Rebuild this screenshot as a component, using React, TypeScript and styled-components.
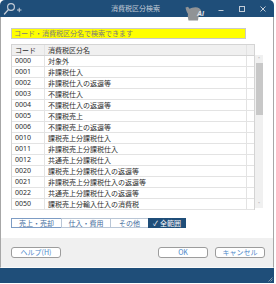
import styled, { createGlobalStyle } from "styled-components";

const GlobalStyle = createGlobalStyle`
  html, body {
    margin: 0;
    padding: 0;
  }
  body {
    width: 276px;
    height: 284px;
    overflow: hidden;
    background: #ffffff;
    font-family: "Noto Sans CJK JP", "Noto Sans", sans-serif;
  }
  * {
    box-sizing: border-box;
  }
`;

const Window = styled.div`
  width: 274px;
  height: 283px;
  display: flex;
  flex-direction: column;
  border-radius: 5px 5px 0 0;
  overflow: hidden;
`;

const TitleBar = styled.div`
  height: 17px;
  flex-shrink: 0;
  background: #1f4e79;
  display: grid;
  grid-template-columns: 1fr auto 1fr;
  align-items: center;
  padding: 0 4px 0 1px;
`;

const Title = styled.div`
  font-size: 7px;
  line-height: 17px;
  color: #c3ccd7;
`;

const Controls = styled.div`
  justify-self: end;
  display: flex;
  align-items: center;
  gap: 7px;
`;

const AiIcon = styled.div`
  position: relative;
  width: 20px;
  height: 15px;
  margin-right: 2px;
  margin-top: 1px;

  span {
    position: absolute;
    right: 1px;
    bottom: 0;
    font-family: "Liberation Sans", sans-serif;
    font-style: italic;
    font-weight: bold;
    font-size: 7px;
    line-height: 7px;
    color: #e2e5e9;
  }
`;

const ControlButton = styled.div`
  width: 14px;
  height: 17px;
  display: flex;
  align-items: center;
  justify-content: center;
`;

const Body = styled.div`
  flex: 1;
  background: #ffffff;
  border-left: 1px solid #a7a7a7;
  border-right: 1px solid #a7a7a7;
  padding: 11px 10px 0 10px;
  display: flex;
  flex-direction: column;
`;

const SearchBox = styled.div`
  width: 235px;
  height: 11px;
  background: #ffff00;
  border: 1px solid #c9c9c9;
  padding-left: 2px;
  font-size: 7px;
  line-height: 9px;
  color: #7c7c7c;
`;

const TableArea = styled.div`
  margin-top: 5px;
  display: flex;
  align-items: flex-start;
`;

const Table = styled.div`
  width: 245px;
  border: 1px solid #d4d4d4;
  border-bottom: none;
`;

const Row = styled.div<{ $head?: boolean }>`
  display: grid;
  grid-template-columns: 33px 202px 1fr;
  height: 11px;
  border-bottom: 1px solid ${(p) => (p.$head ? "#d4d4d4" : "#e3e3e3")};
  background: ${(p) => (p.$head ? "#f0f0f0" : "#ffffff")};
  font-size: 7px;
  line-height: 10px;
  color: #2b2b2b;
`;

const Cell = styled.div<{ $last?: boolean; $code?: boolean }>`
  padding-left: 3px;
  white-space: nowrap;
  overflow: hidden;
  color: #2b2b2b;
  font-family: ${(p) =>
    p.$code ? '"Noto Sans", sans-serif' : '"Noto Sans CJK JP", sans-serif'};
  border-right: ${(p) => (p.$last ? "none" : "1px solid #e3e3e3")};
`;

const ScrollBar = styled.div`
  width: 8px;
  height: 153px;
  margin-top: 11px;
  background: #f0f0f0;
  display: flex;
  flex-direction: column;
  align-items: center;
`;

const Arrow = styled.div`
  height: 8px;
  font-size: 5px;
  line-height: 8px;
  color: #9a9a9a;
  font-family: "DejaVu Sans", sans-serif;
`;

const Thumb = styled.div`
  width: 7px;
  height: 52px;
  background: #c8c8c8;
`;

const Spacer = styled.div`
  flex: 1;
`;

const Filters = styled.div`
  margin-top: 8px;
  margin-left: 1px;
  display: flex;
`;

const FilterButton = styled.div<{ $w: number; $active?: boolean; $focus?: boolean }>`
  width: ${(p) => p.$w}px;
  height: 10px;
  display: flex;
  align-items: center;
  justify-content: center;
  gap: 2px;
  font-size: 7px;
  line-height: 8px;
  background: ${(p) => (p.$active ? "#1f4e79" : "#ffffff")};
  color: ${(p) => (p.$active ? "#ffffff" : "#3f6b9b")};
  border: 1px solid
    ${(p) => (p.$active ? "#1f4e79" : p.$focus ? "#7d9cc4" : "#b9c6d6")};
  margin-left: -1px;
`;

const Footer = styled.div`
  height: 30px;
  flex-shrink: 0;
  background: #f0f0f0;
  border-left: 1px solid #a7a7a7;
  border-right: 1px solid #a7a7a7;
  border-bottom: 1px solid #fafafa;
  display: flex;
  align-items: flex-start;
  padding: 9px 8px 0 10px;
  gap: 7px;
`;

const FooterButton = styled.div<{ $push?: boolean }>`
  width: 50px;
  height: 11px;
  margin-left: ${(p) => (p.$push ? "auto" : "0")};
  border: 1px solid #9c9c9c;
  border-radius: 3px;
  background: #ffffff;
  color: #4d88c9;
  font-size: 7px;
  line-height: 9px;
  text-align: center;
`;

const BottomBar = styled.div`
  height: 15px;
  flex-shrink: 0;
  background: #1f4e79;
  display: flex;
  justify-content: flex-end;
  align-items: flex-end;
  padding: 0 1px 1px 0;
`;

const rows: [string, string][] = [
  ["0000", "対象外"],
  ["0001", "非課税仕入"],
  ["0002", "非課税仕入の返還等"],
  ["0003", "不課税仕入"],
  ["0004", "不課税仕入の返還等"],
  ["0005", "不課税売上"],
  ["0006", "不課税売上の返還等"],
  ["0010", "課税売上分課税仕入"],
  ["0011", "非課税売上分課税仕入"],
  ["0012", "共通売上分課税仕入"],
  ["0020", "課税売上分課税仕入の返還等"],
  ["0021", "非課税売上分課税仕入の返還等"],
  ["0022", "共通売上分課税仕入の返還等"],
  ["0050", "課税売上分輸入仕入の消費税"],
];

function App() {
  return (
    <>
      <GlobalStyle />
      <Window>
        <TitleBar>
          <svg width="22" height="17" viewBox="0 0 22 17">
            <circle cx="10" cy="7" r="3.4" fill="none" stroke="#c3ccd7" strokeWidth="1.2" />
            <path d="M7.6 9.4 L3.5 14" stroke="#c3ccd7" strokeWidth="1.4" strokeLinecap="round" />
            <path d="M16 10 H20.5 M18.25 7.8 V12.2" stroke="#c3ccd7" strokeWidth="1" />
          </svg>
          <Title>消費税区分検索</Title>
          <Controls>
            <AiIcon>
              <svg width="20" height="15" viewBox="0 0 20 15">
                <path
                  d="M0.5 1.5 L3 0.8 L4.5 2.8 C6 2 8 1.2 10.5 1.2 C13.5 1.2 15.5 2.5 16 4.5 C16.5 7 15.5 9 13.5 10.5 L13 14.5 L3.5 14.5 C3 12 2.5 10 3 8 C2 6.5 1 4.5 0.5 1.5 Z"
                  fill="#909396"
                />
              </svg>
              <span>AI</span>
            </AiIcon>
            <ControlButton>
              <svg width="8" height="8" viewBox="0 0 8 8">
                <path d="M1.5 5.5 H6.5" stroke="#c3ccd7" strokeWidth="1" />
              </svg>
            </ControlButton>
            <ControlButton>
              <svg width="8" height="8" viewBox="0 0 8 8">
                <rect x="1.5" y="1.5" width="5" height="5" fill="none" stroke="#c3ccd7" strokeWidth="1" />
              </svg>
            </ControlButton>
            <ControlButton>
              <svg width="8" height="8" viewBox="0 0 8 8">
                <path d="M1.5 1.5 L6.5 6.5 M6.5 1.5 L1.5 6.5" stroke="#c3ccd7" strokeWidth="1" />
              </svg>
            </ControlButton>
          </Controls>
        </TitleBar>

        <Body>
          <SearchBox>コード・消費税区分名で検索できます</SearchBox>
          <TableArea>
            <Table>
              <Row $head>
                <Cell>コード</Cell>
                <Cell>消費税区分名</Cell>
                <Cell $last />
              </Row>
              {rows.map(([code, name]) => (
                <Row key={code}>
                  <Cell $code>{code}</Cell>
                  <Cell>{name}</Cell>
                  <Cell $last />
                </Row>
              ))}
            </Table>
            <ScrollBar>
              <Arrow>˄</Arrow>
              <Thumb />
              <Spacer />
              <Arrow>˅</Arrow>
            </ScrollBar>
          </TableArea>
          <Filters>
            <FilterButton $w={51} $focus>
              売上・売却
            </FilterButton>
            <FilterButton $w={50}>仕入・費用</FilterButton>
            <FilterButton $w={39}>その他</FilterButton>
            <FilterButton $w={38} $active>
              <span>✓</span>
              <span>全範囲</span>
            </FilterButton>
          </Filters>
        </Body>

        <Footer>
          <FooterButton>ヘルプ(H)</FooterButton>
          <FooterButton $push>OK</FooterButton>
          <FooterButton>キャンセル</FooterButton>
        </Footer>

        <BottomBar>
          <svg width="5" height="5" viewBox="0 0 5 5">
            <path d="M4.5 0.5 L0.5 4.5 M4.5 2.5 L2.5 4.5" stroke="#9aa8b8" strokeWidth="0.8" />
          </svg>
        </BottomBar>
      </Window>
    </>
  );
}

export default App;
